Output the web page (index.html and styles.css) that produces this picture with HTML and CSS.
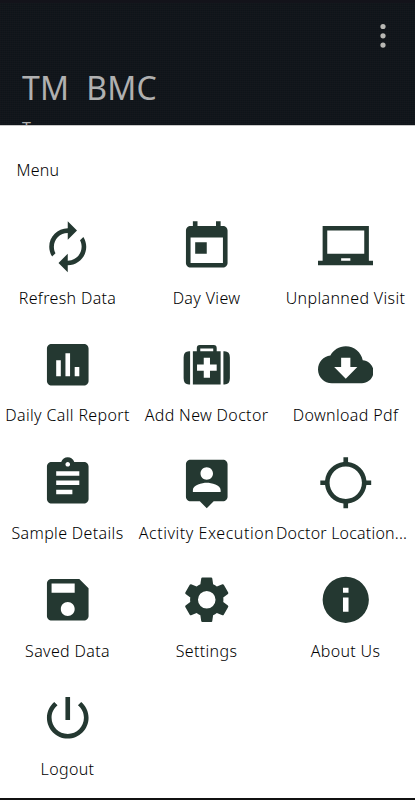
FILE: index.html
```
<!DOCTYPE html>
<html lang="en">
<head>
<meta charset="utf-8">
<title>Menu</title>
<link rel="stylesheet" href="styles.css">
</head>
<body>
<header class="header">
  <svg class="more" viewBox="0 0 8 28"><circle cx="4" cy="4.500" r="2.600"/><circle cx="4" cy="13.800" r="2.600"/><circle cx="4" cy="23.100" r="2.600"/></svg>
  <h1 class="title">TM&nbsp; BMC</h1>
  <p class="subtitle">Tue</p>
</header>
<main class="sheet">
  <h2 class="heading">Menu</h2>
  <div class="grid">
    <div class="item"><svg class="icon" viewBox="0 0 24 24"><path d="M12 6v3l4-4-4-4v3c-4.420 0-8 3.580-8 8 0 1.570.46 3.030 1.240 4.260L6.700 14.800c-.45-.83-.7-1.790-.7-2.800 0-3.310 2.690-6 6-6zm6.760 1.740L17.300 9.200c.44.84.7 1.790.7 2.800 0 3.310-2.690 6-6 6v-3l-4 4 4 4v-3c4.420 0 8-3.580 8-8 0-1.570-.46-3.030-1.240-4.260z"/></svg><span class="label">Refresh Data</span></div>
    <div class="item"><svg class="icon" viewBox="0 0 24 24"><path d="M19 3h-1V1h-2v2H8V1H6v2H5c-1.110 0-1.990.9-1.990 2L3 19c0 1.100.89 2 2 2h14c1.100 0 2-.9 2-2V5c0-1.100-.9-2-2-2zm0 16H5V8h14v11zM7 10h5v5H7z"/></svg><span class="label">Day View</span></div>
    <div class="item"><svg class="icon" viewBox="0 0 24 24"><path d="M22 18V3H2v15H0v2h24v-2h-2zm-8 0h-4v-1h4v1zm6-3H4V5h16v10z"/></svg><span class="label">Unplanned Visit</span></div>
    <div class="item"><svg class="icon" viewBox="0 0 24 24"><path d="M19 3H5c-1.100 0-2 .9-2 2v14c0 1.100.9 2 2 2h14c1.100 0 2-.9 2-2V5c0-1.100-.9-2-2-2zM9 17H7v-7h2v7zm4 0h-2V7h2v10zm4 0h-2v-4h2v4z"/></svg><span class="label">Daily Call Report</span></div>
    <div class="item"><svg class="icon" viewBox="0 0 24 24"><path fill-rule="evenodd" d="M4.800 6.200V20.500H4.300Q2 20.500 2 17.800V8.900Q2 6.200 4.300 6.200zM19.200 6.200V20.500h.5Q22 20.500 22 17.800V8.900Q22 6.200 19.700 6.200zM6 6.200H7.700V4.800Q7.700 3.500 9 3.500h6Q16.300 3.500 16.300 4.800V6.200H18V20.500H6zM9.200 6.200h5.600V5H9.200zM10.700 9v2.900H7.800v2.700h2.900v3h2.700v-3h2.900v-2.700h-2.900V9z"/></svg><span class="label">Add New Doctor</span></div>
    <div class="item"><svg class="icon" viewBox="0 0 24 24"><path d="M19.350 10.040C18.670 6.590 15.640 4 12 4 9.110 4 6.600 5.640 5.350 8.040 2.340 8.360 0 10.910 0 14c0 3.310 2.690 6 6 6h13c2.760 0 5-2.240 5-5 0-2.640-2.050-4.780-4.650-4.960zM17 13l-5 5-5-5h3V9h4v4h3z"/></svg><span class="label">Download Pdf</span></div>
    <div class="item"><svg class="icon" viewBox="0 0 24 24"><path d="M19 3h-4.180C14.400 1.840 13.300 1 12 1c-1.300 0-2.400.84-2.820 2H5c-1.100 0-2 .9-2 2v14c0 1.100.9 2 2 2h14c1.100 0 2-.9 2-2V5c0-1.100-.9-2-2-2zm-7 0c.55 0 1 .45 1 1s-.45 1-1 1-1-.45-1-1 .45-1 1-1zm2 14H7v-2h7v2zm3-4H7v-2h10v2zm0-4H7V7h10v2z"/></svg><span class="label">Sample Details</span></div>
    <div class="item"><svg class="icon" viewBox="0 0 24 24"><path d="M19 2H5c-1.110 0-2 .9-2 2v14c0 1.100.89 2 2 2h4l3 3 3-3h4c1.100 0 2-.9 2-2V4c0-1.100-.9-2-2-2zm-7 3.300c1.490 0 2.700 1.210 2.700 2.700 0 1.490-1.210 2.700-2.700 2.700-1.490 0-2.700-1.210-2.700-2.700 0-1.490 1.210-2.700 2.700-2.700zM18 16H6v-.9c0-2 4-3.100 6-3.100s6 1.100 6 3.100v.9z"/></svg><span class="label label-wide">Activity Execution</span></div>
    <div class="item"><svg class="icon" viewBox="0 0 24 24"><path d="M20.940 11c-.46-4.170-3.770-7.480-7.940-7.940V1h-2v2.060C6.830 3.520 3.520 6.830 3.060 11H1v2h2.060c.46 4.170 3.770 7.480 7.940 7.940V23h2v-2.060c4.170-.46 7.480-3.770 7.940-7.940H23v-2h-2.060zM12 19c-3.870 0-7-3.130-7-7s3.130-7 7-7 7 3.130 7 7-3.130 7-7 7z"/></svg><span class="label label-clipped">Doctor Location...</span></div>
    <div class="item"><svg class="icon" viewBox="0 0 24 24"><path d="M17 3H5c-1.110 0-2 .9-2 2v14c0 1.100.89 2 2 2h14c1.100 0 2-.9 2-2V7l-4-4zm-5 16c-1.660 0-3-1.340-3-3s1.340-3 3-3 3 1.340 3 3-1.340 3-3 3zm3-10H5V5h10v4z"/></svg><span class="label">Saved Data</span></div>
    <div class="item"><svg class="icon" viewBox="0 0 24 24"><path d="M19.140 12.940c.04-.3.06-.61.06-.94 0-.32-.02-.64-.07-.94l2.030-1.580c.18-.14.23-.41.12-.61l-1.920-3.320c-.12-.22-.37-.29-.59-.22l-2.390.96c-.5-.38-1.030-.7-1.620-.94l-.36-2.540c-.04-.24-.24-.41-.48-.41h-3.840c-.24 0-.43.17-.47.41l-.36 2.540c-.59.24-1.130.57-1.620.94l-2.390-.96c-.22-.08-.47 0-.59.22L2.740 8.870c-.12.21-.08.47.12.61l2.030 1.580c-.05.3-.09.63-.09.94s.02.64.07.94l-2.030 1.580c-.18.14-.23.41-.12.61l1.920 3.320c.12.22.37.29.59.22l2.390-.96c.5.38 1.030.7 1.620.94l.36 2.540c.05.24.24.41.48.41h3.840c.24 0 .44-.17.47-.41l.36-2.540c.59-.24 1.130-.56 1.620-.94l2.390.96c.22.08.47 0 .59-.22l1.920-3.320c.12-.22.07-.47-.12-.61l-2.010-1.580zM12 15.800a3.800 3.800 0 1 1 0-7.600 3.800 3.800 0 0 1 0 7.600z"/></svg><span class="label">Settings</span></div>
    <div class="item"><svg class="icon" viewBox="0 0 24 24"><path fill-rule="evenodd" d="M12 2a10 10 0 1 0 0 20 10 10 0 0 0 0-20zM10.800 11h2.400v6.200h-2.400zM10.800 6.800h2.400v2.200h-2.400z"/></svg><span class="label">About Us</span></div>
    <div class="item"><svg class="icon" viewBox="0 0 24 24"><path d="M13 3h-2v10h2V3zm4.830 2.170l-1.420 1.420C17.990 7.860 19 9.810 19 12c0 3.870-3.130 7-7 7s-7-3.130-7-7c0-2.190 1.010-4.140 2.580-5.420L6.170 5.170C4.230 6.820 3 9.260 3 12c0 4.970 4.030 9 9 9s9-4.030 9-9c0-2.740-1.230-5.180-3.170-6.830z"/></svg><span class="label">Logout</span></div>
  </div>
</main>
</body>
</html>
```
FILE: styles.css
```
* { box-sizing: border-box; }
body {
  margin: 0;
  width: 415px;
  height: 800px;
  overflow: hidden;
  background: #fff;
  color: #000;
  font-family: "Noto Sans", Lato, sans-serif;
  display: flex;
  flex-direction: column;
}
.header {
  flex: none;
  height: 125px;
  overflow: hidden;
  display: flex;
  flex-direction: column;
  padding: 22px 28.500px 0 22px;
  color: #b0b0b0;
  background-color: #11171c;
  background-image:
    linear-gradient(#13131a 3px, transparent 3px),
    repeating-linear-gradient(90deg, rgba(28, 26, 30, .35) 0 1px, transparent 1px 2px),
    repeating-linear-gradient(rgba(8, 15, 20, .4) 0 1px, transparent 1px 2px);
}
.more {
  flex: none;
  align-self: flex-end;
  width: 8px;
  height: 28px;
  fill: #b8b8b4;
}
.title {
  flex: none;
  margin: 18px 0 0;
  font-size: 32px;
  line-height: 40px;
  font-weight: 400;
  letter-spacing: .2px;
  white-space: nowrap;
}
.subtitle {
  flex: none;
  margin: 10px 0 0;
  font-size: 16px;
  line-height: 20px;
}
.sheet {
  flex: 1;
  border-top: 1px solid #c8c8c8;
  border-bottom: 2px solid #111;
  overflow: hidden;
}
.heading {
  margin: 33px 0 0 16.500px;
  font-size: 16px;
  line-height: 22px;
  font-weight: 350;
  letter-spacing: .2px;
}
.grid {
  display: grid;
  grid-template-columns: repeat(3, 139px);
  grid-auto-rows: 117.750px;
  margin: 38px 0 0 -2px;
}
.item {
  display: flex;
  flex-direction: column;
  align-items: center;
}
.icon {
  flex: none;
  width: 55.500px;
  height: 55.500px;
  fill: #243831;
}
.label {
  margin-top: 12px;
  font-size: 16px;
  line-height: 22px;
  font-weight: 350;
  letter-spacing: .35px;
  white-space: nowrap;
}
.label-wide {
  letter-spacing: .55px;
}
.label-clipped {
  align-self: flex-start;
  letter-spacing: .2px;
}
```
